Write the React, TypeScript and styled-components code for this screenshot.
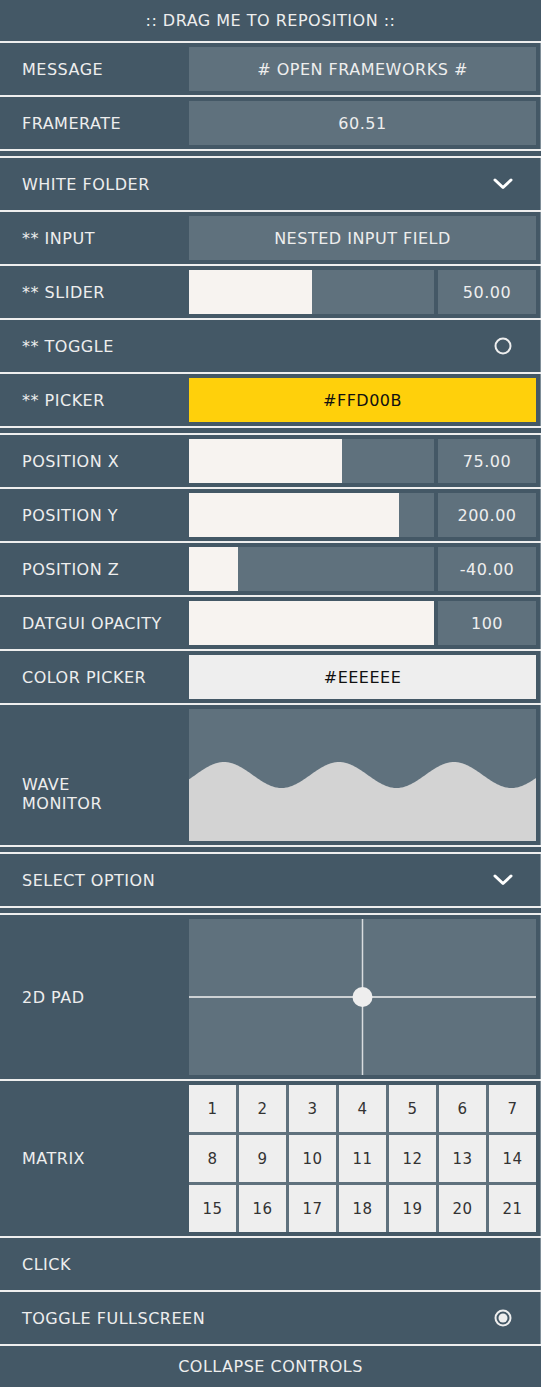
import React from "react";
import styled, { createGlobalStyle } from "styled-components";

const BG = "#445866";
const FIELD = "#5f717d";
const LINE = "#eeeeee";
const TEXT = "#eeeeee";

const GlobalStyle = createGlobalStyle`
  html, body {
    margin: 0;
    padding: 0;
    background: ${BG};
  }
  body {
    font-family: "DejaVu Sans", Verdana, sans-serif;
    font-size: 16px;
    letter-spacing: 0.5px;
    color: ${TEXT};
  }
`;

const Panel = styled.div`
  width: 541px;
  display: flex;
  flex-direction: column;
  background: ${BG};
`;

const Header = styled.div<{ $h?: number; $line?: boolean }>`
  height: ${(p) => p.$h ?? 41}px;
  display: flex;
  align-items: center;
  justify-content: center;
  border-bottom: ${(p) => (p.$line ? `2px solid ${LINE}` : "none")};
  box-sizing: content-box;
`;

const Row = styled.div<{ $h?: number }>`
  height: ${(p) => p.$h ?? 52}px;
  display: flex;
  align-items: center;
  padding: 0 5px 0 22px;
  border-bottom: 2px solid ${LINE};
  box-shadow: inset -1px 0 0 #7f8e98;
`;

const GroupBreak = styled.div`
  height: 5px;
  border-bottom: 2px solid ${LINE};
`;

const Label = styled.div<{ $shift?: number }>`
  width: 167px;
  flex-shrink: 0;
  line-height: 19px;
  padding-top: ${(p) => p.$shift ?? 0}px;
  white-space: nowrap;
`;

const Field = styled.div<{ $bg?: string; $color?: string }>`
  flex: 1;
  height: 44px;
  background: ${(p) => p.$bg ?? FIELD};
  color: ${(p) => p.$color ?? TEXT};
  display: flex;
  align-items: center;
  justify-content: center;
`;

const SliderWrap = styled.div`
  flex: 1;
  height: 44px;
  display: flex;
  gap: 4px;
`;

const Track = styled.div`
  flex: 1;
  background: ${FIELD};
  display: flex;
`;

const Fill = styled.div`
  background: #f7f3f0;
  height: 100%;
`;

const ValueBox = styled.div`
  width: 98px;
  background: ${FIELD};
  display: flex;
  align-items: center;
  justify-content: center;
`;

const Spacer = styled.div`
  flex: 1;
`;

const IconSlot = styled.div`
  width: 20px;
  height: 20px;
  margin-right: 23px;
  display: flex;
  align-items: center;
  justify-content: center;
`;

const Canvas = styled.div<{ $h: number }>`
  flex: 1;
  height: ${(p) => p.$h}px;
  background: ${FIELD};
  display: flex;
`;

const MatrixGrid = styled.div`
  flex: 1;
  display: grid;
  grid-template-columns: repeat(7, 1fr);
  grid-auto-rows: 47px;
  gap: 3px;
  background: ${FIELD};
`;

const Cell = styled.div`
  background: #eeeeee;
  color: #333333;
  font-size: 15px;
  display: flex;
  align-items: center;
  justify-content: center;
`;

const Chevron = () => (
  <svg width="20" height="12" viewBox="0 0 20 12">
    <polyline
      points="2,2 10,9.5 18,2"
      fill="none"
      stroke="#ffffff"
      strokeWidth="3"
      strokeLinecap="round"
      strokeLinejoin="round"
    />
  </svg>
);

const Ring = ({ on }: { on?: boolean }) => (
  <svg width="20" height="20" viewBox="0 0 20 20">
    <circle cx="10" cy="10" r="7.5" fill="none" stroke="#eeeeee" strokeWidth="2" />
    {on && <circle cx="10" cy="10" r="4.5" fill="#eeeeee" />}
  </svg>
);

const wavePath = (() => {
  const w = 347;
  const h = 132;
  const pts: string[] = [];
  for (let x = 0; x <= w; x += 1) {
    const y = 66 - 13 * Math.sin((2 * Math.PI * (x - 6.25)) / 115);
    pts.push(`${x},${y.toFixed(2)}`);
  }
  return `M0,${h} L${pts.join(" L")} L${w},${h} Z`;
})();

const Wave = () => (
  <svg width="347" height="132" viewBox="0 0 347 132">
    <path d={wavePath} fill="#d3d3d3" />
  </svg>
);

const Pad = () => (
  <svg width="347" height="156" viewBox="0 0 347 156">
    <line x1="173.5" y1="0" x2="173.5" y2="156" stroke="#d8dcdf" strokeWidth="1.5" />
    <line x1="0" y1="78" x2="347" y2="78" stroke="#f2f2f2" strokeWidth="1.5" />
    <circle cx="173.5" cy="78" r="10" fill="#eeeeee" />
  </svg>
);

const SliderRow = ({ label, pct, value }: { label: string; pct: number; value: string }) => (
  <Row>
    <Label>{label}</Label>
    <SliderWrap>
      <Track>
        <Fill style={{ width: `${pct}%` }} />
      </Track>
      <ValueBox>{value}</ValueBox>
    </SliderWrap>
  </Row>
);

export default function App() {
  const cells = Array.from({ length: 21 }, (_, i) => i + 1);
  return (
    <>
      <GlobalStyle />
      <Panel>
        <Header $line>:: DRAG ME TO REPOSITION ::</Header>
        <Row>
          <Label>MESSAGE</Label>
          <Field># OPEN FRAMEWORKS #</Field>
        </Row>
        <Row>
          <Label>FRAMERATE</Label>
          <Field>60.51</Field>
        </Row>
        <GroupBreak />
        <Row>
          <Label>WHITE FOLDER</Label>
          <Spacer />
          <IconSlot>
            <Chevron />
          </IconSlot>
        </Row>
        <Row>
          <Label>** INPUT</Label>
          <Field>NESTED INPUT FIELD</Field>
        </Row>
        <SliderRow label="** SLIDER" pct={50} value="50.00" />
        <Row>
          <Label>** TOGGLE</Label>
          <Spacer />
          <IconSlot>
            <Ring />
          </IconSlot>
        </Row>
        <Row>
          <Label>** PICKER</Label>
          <Field $bg="#ffd00b" $color="#111111">#FFD00B</Field>
        </Row>
        <GroupBreak />
        <SliderRow label="POSITION X" pct={62.5} value="75.00" />
        <SliderRow label="POSITION Y" pct={85.7} value="200.00" />
        <SliderRow label="POSITION Z" pct={20} value="-40.00" />
        <SliderRow label="DATGUI OPACITY" pct={100} value="100" />
        <Row>
          <Label>COLOR PICKER</Label>
          <Field $bg="#eeeeee" $color="#111111">#EEEEEE</Field>
        </Row>
        <Row $h={140}>
          <Label $shift={37}>
            WAVE
            <br />
            MONITOR
          </Label>
          <Canvas $h={132}>
            <Wave />
          </Canvas>
        </Row>
        <GroupBreak />
        <Row>
          <Label>SELECT OPTION</Label>
          <Spacer />
          <IconSlot>
            <Chevron />
          </IconSlot>
        </Row>
        <GroupBreak />
        <Row $h={164}>
          <Label>2D PAD</Label>
          <Canvas $h={156}>
            <Pad />
          </Canvas>
        </Row>
        <Row $h={155}>
          <Label>MATRIX</Label>
          <MatrixGrid>
            {cells.map((n) => (
              <Cell key={n}>{n}</Cell>
            ))}
          </MatrixGrid>
        </Row>
        <Row>
          <Label>CLICK</Label>
        </Row>
        <Row>
          <Label>TOGGLE FULLSCREEN</Label>
          <Spacer />
          <IconSlot>
            <Ring on />
          </IconSlot>
        </Row>
        <Header>COLLAPSE CONTROLS</Header>
      </Panel>
    </>
  );
}
